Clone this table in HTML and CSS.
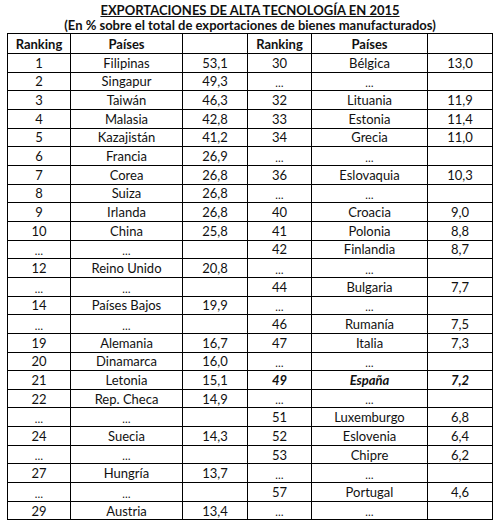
FILE: index.html
```html
<!DOCTYPE html>
<html lang="es">
<head>
  <meta charset="UTF-8">
  <title>Exportaciones de alta tecnología en 2015</title>
  <link rel="stylesheet" href="styles.css">
</head>
<body>
  <div class="sheet">
    <!-- Title -->
    <h1 class="title">EXPORTACIONES DE ALTA TECNOLOGÍA EN 2015</h1>
    <p class="subtitle">(En % sobre el total de exportaciones de bienes manufacturados)</p>

    <table class="ranking">
      <colgroup>
        <col class="c-rank">
        <col class="c-country">
        <col class="c-value">
        <col class="c-rank2">
        <col class="c-country2">
        <col class="c-value">
      </colgroup>
      <thead>
        <tr>
          <th>Ranking</th><th>Países</th><th></th>
          <th>Ranking</th><th>Países</th><th></th>
        </tr>
      </thead>
      <tbody>
        <tr><td>1</td><td>Filipinas</td><td>53,1</td><td>30</td><td>Bélgica</td><td>13,0</td></tr>
        <tr><td>2</td><td>Singapur</td><td>49,3</td><td class="dots">…</td><td class="dots">…</td><td></td></tr>
        <tr><td>3</td><td>Taiwán</td><td>46,3</td><td>32</td><td>Lituania</td><td>11,9</td></tr>
        <tr><td>4</td><td>Malasia</td><td>42,8</td><td>33</td><td>Estonia</td><td>11,4</td></tr>
        <tr><td>5</td><td>Kazajistán</td><td>41,2</td><td>34</td><td>Grecia</td><td>11,0</td></tr>
        <tr><td>6</td><td>Francia</td><td>26,9</td><td class="dots">…</td><td class="dots">…</td><td></td></tr>
        <tr><td>7</td><td>Corea</td><td>26,8</td><td>36</td><td>Eslovaquia</td><td>10,3</td></tr>
        <tr><td>8</td><td>Suiza</td><td>26,8</td><td class="dots">…</td><td class="dots">…</td><td></td></tr>
        <tr><td>9</td><td>Irlanda</td><td>26,8</td><td>40</td><td>Croacia</td><td>9,0</td></tr>
        <tr><td>10</td><td>China</td><td>25,8</td><td>41</td><td>Polonia</td><td>8,8</td></tr>
        <tr><td class="dots">…</td><td class="dots">…</td><td></td><td>42</td><td>Finlandia</td><td>8,7</td></tr>
        <tr><td>12</td><td>Reino Unido</td><td>20,8</td><td class="dots">…</td><td class="dots">…</td><td></td></tr>
        <tr><td class="dots">…</td><td class="dots">…</td><td></td><td>44</td><td>Bulgaria</td><td>7,7</td></tr>
        <tr><td>14</td><td>Países Bajos</td><td>19,9</td><td class="dots">…</td><td class="dots">…</td><td></td></tr>
        <tr><td class="dots">…</td><td class="dots">…</td><td></td><td>46</td><td>Rumanía</td><td>7,5</td></tr>
        <tr><td>19</td><td>Alemania</td><td>16,7</td><td>47</td><td>Italia</td><td>7,3</td></tr>
        <tr><td>20</td><td>Dinamarca</td><td>16,0</td><td class="dots">…</td><td class="dots">…</td><td></td></tr>
        <tr><td>21</td><td>Letonia</td><td>15,1</td><td class="spain">49</td><td class="spain">España</td><td class="spain">7,2</td></tr>
        <tr><td>22</td><td>Rep. Checa</td><td>14,9</td><td class="dots">…</td><td class="dots">…</td><td></td></tr>
        <tr><td class="dots">…</td><td class="dots">…</td><td></td><td>51</td><td>Luxemburgo</td><td>6,8</td></tr>
        <tr><td>24</td><td>Suecia</td><td>14,3</td><td>52</td><td>Eslovenia</td><td>6,4</td></tr>
        <tr><td class="dots">…</td><td class="dots">…</td><td></td><td>53</td><td>Chipre</td><td>6,2</td></tr>
        <tr><td>27</td><td>Hungría</td><td>13,7</td><td class="dots">…</td><td class="dots">…</td><td></td></tr>
        <tr><td class="dots">…</td><td class="dots">…</td><td></td><td>57</td><td>Portugal</td><td>4,6</td></tr>
        <tr><td>29</td><td>Austria</td><td>13,4</td><td class="dots">…</td><td class="dots">…</td><td></td></tr>
      </tbody>
    </table>
  </div>
</body>
</html>
```
FILE: styles.css
```css
/* Page */
body {
  margin: 0;
  background-color: #fff;
  color: #111;
  font-family: Lato, "Liberation Sans", sans-serif;
}

.sheet {
  padding: 3px 0 0 7px;
  width: 486px;
}

.title {
  margin: 0;
  font-size: 13px;
  line-height: 15px;
  font-weight: bold;
  text-align: center;
  text-decoration: underline;
}

.subtitle {
  margin: 0;
  font-size: 13px;
  line-height: 15px;
  font-weight: bold;
  text-align: center;
}

/* Table */
.ranking {
  border-collapse: collapse;
  table-layout: fixed;
  width: 486px;
}

.c-rank { width: 63px; }
.c-country { width: 112px; }
.c-value { width: 65px; }
.c-rank2 { width: 64px; }
.c-country2 { width: 116px; }

.ranking th,
.ranking td {
  border: 1px solid #000;
  padding: 0;
  text-align: center;
  font-size: 13px;
  white-space: nowrap;
}

.ranking th {
  height: 19px;
  font-weight: bold;
}

.ranking td {
  height: 17.66px;
}

.ranking .dots {
  font-size: 11px;
  vertical-align: bottom;
  line-height: 14px;
}

.ranking .spain {
  font-weight: bold;
  font-style: italic;
}
```
